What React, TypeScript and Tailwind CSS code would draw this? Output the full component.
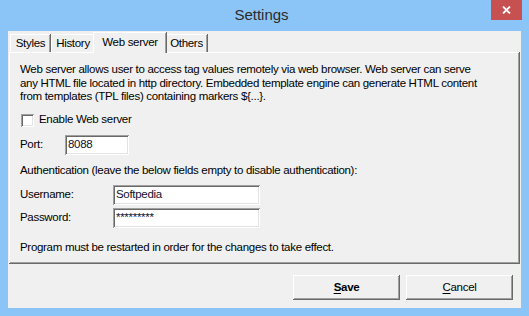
import React from 'react';

const raised =
  'shadow-[inset_-1px_-1px_#696969,inset_1px_1px_#ffffff,inset_-2px_-2px_#a0a0a0]';
const sunken =
  'shadow-[inset_1px_1px_#a0a0a0,inset_-1px_-1px_#ffffff,inset_2px_2px_#696969,inset_-2px_-2px_#e3e3e3]';

const Tab: React.FC<{ label: string; width: string; active?: boolean }> = ({ label, width, active }) => (
  <div
    className={
      active
        ? `${width} h-[21px] relative z-10 -mx-[2px] -mb-[1px] bg-[#f0f0f0] flex items-start justify-center pt-[2px] shadow-[inset_-1px_0_#696969,inset_1px_1px_#ffffff,inset_-2px_0_#a0a0a0]`
        : `${width} h-[18px] bg-[#f0f0f0] flex items-center justify-center pt-[1px] shadow-[inset_-1px_0_#696969,inset_1px_1px_#ffffff,inset_-2px_0_#a0a0a0]`
    }
  >
    {label}
  </div>
);

const Field: React.FC<{ value: string; width: string }> = ({ value, width }) => (
  <div className={`${width} h-[20px] bg-white ${sunken} flex items-center pl-[3px] text-[#101030]`}>
    {value}
  </div>
);

const App: React.FC = () => {
  return (
    <div
      className="w-[529px] h-[316px] bg-[#8bc5f7] flex flex-col text-black text-[11.5px] tracking-[-0.3px]"
      style={{ fontFamily: '"Liberation Sans", Arial, sans-serif' }}
    >
      {/* Title bar */}
      <div className="h-[31px] relative flex items-center justify-center tracking-normal">
        <span className="text-[15px] text-[#2b2b2b] -mt-[1px] -ml-[6px]">Settings</span>
        <div className="absolute top-0 right-[7px] w-[31px] h-[20px] bg-[#c75050] flex items-center justify-center">
          <svg width="9" height="8" viewBox="0 0 9 8">
            <path d="M1 0.5 L8 7.5 M8 0.5 L1 7.5" stroke="#fff" strokeWidth="1.8" />
          </svg>
        </div>
      </div>

      {/* Client area */}
      <div className="mx-[8px] h-[277px] bg-[#f0f0f0] flex flex-col">
        {/* Tabs */}
        <div className="flex items-end pl-[2px] pt-[1px] h-[21px]">
          <Tab label="Styles" width="w-[41px]" />
          <Tab label="History" width="w-[44px]" />
          <Tab label="Web server" width="w-[74px]" active />
          <Tab label="Others" width="w-[43px]" />
        </div>

        {/* Panel */}
        <div className={`ml-[1px] mr-[1px] h-[212px] bg-[#f0f0f0] ${raised} flex flex-col pl-[11px]`}>
          <div className="pt-[11px] leading-[13.5px]">
            <div className="whitespace-nowrap">
              Web server allows user to access tag values remotely via web browser. Web server can serve
            </div>
            <div className="whitespace-nowrap">
              any HTML file located in http directory. Embedded template engine can generate HTML content
            </div>
            <div className="whitespace-nowrap">from templates (TPL files) containing markers {'${...}'}.</div>
          </div>

          <div className="mt-[10px] h-[13px] flex items-center">
            <div className={`w-[13px] h-[13px] bg-white ${sunken} ml-[1px]`} />
            <span className="ml-[5px]">Enable Web server</span>
          </div>

          <div className="mt-[8px] h-[20px] flex items-center">
            <span className="w-[45px] pt-[1px]">Port:</span>
            <Field value="8088" width="w-[64px]" />
          </div>

          <div className="mt-[9px] h-[14px] flex items-center">
            Authentication (leave the below fields empty to disable authentication):
          </div>

          <div className="mt-[7px] h-[20px] flex items-center">
            <span className="w-[93px]">Username:</span>
            <Field value="Softpedia" width="w-[147px]" />
          </div>

          <div className="mt-[3px] h-[20px] flex items-center">
            <span className="w-[93px]">Password:</span>
            <Field value="*********" width="w-[147px]" />
          </div>

          <div className="mt-[13px] h-[14px] flex items-center">
            Program must be restarted in order for the changes to take effect.
          </div>
        </div>

        {/* Buttons */}
        <div className="flex justify-end gap-[6px] pr-[8px] pt-[11px]">
          <button className={`w-[107px] h-[25px] bg-[#f0f0f0] ${raised} font-bold`}>
            <span className="underline underline-offset-2">S</span>ave
          </button>
          <button className={`w-[107px] h-[25px] bg-[#f0f0f0] ${raised}`}>
            <span className="underline underline-offset-2">C</span>ancel
          </button>
        </div>
      </div>
    </div>
  );
};

export default App;
